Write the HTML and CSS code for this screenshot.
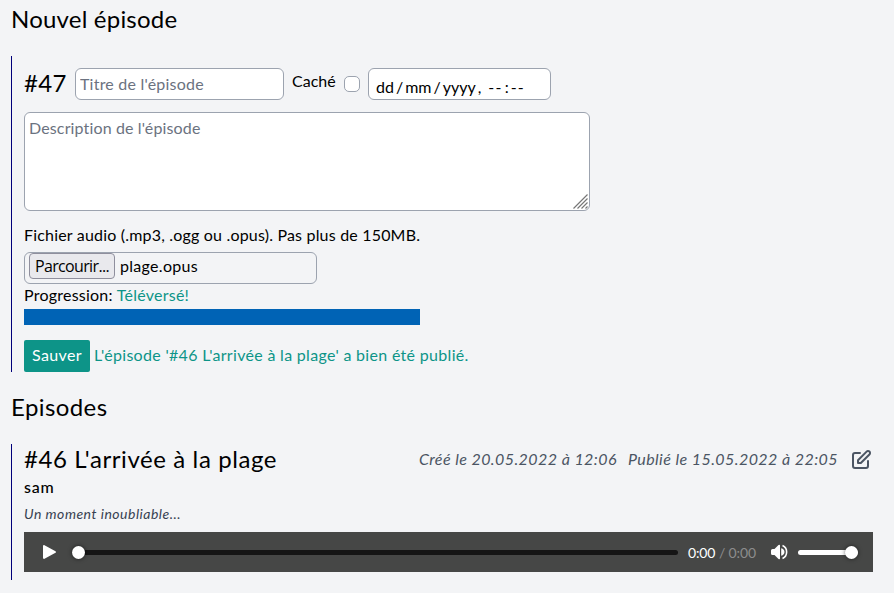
FILE: index.html
```html
<!DOCTYPE html>
<html lang="fr">
<head>
<meta charset="utf-8">
<title>Nouvel épisode</title>
<link rel="stylesheet" href="styles.css">
</head>
<body>
<h1 class="heading"><span class="t-new">Nouvel épisode</span></h1>
<form class="panel form">
  <div class="row">
    <span class="number">#47</span>
    <input class="field title" type="text" placeholder="Titre de l'épisode">
    <label class="hidden-label" for="hidden">Caché</label>
    <input class="check" id="hidden" type="checkbox">
    <div class="field date"><span>dd</span><span>/</span><span>mm</span><span>/</span><span>yyyy</span><span>,</span><span class="time">--</span><span>:</span><span class="dash">--</span></div>
  </div>
  <div class="area-wrap">
    <textarea class="field area" placeholder="Description de l'épisode"></textarea>
    <svg class="grip" width="15" height="15" viewBox="0 0 15 15"><path d="M.5 14.500 14.500.5M4.500 14.500l10-10M8.500 14.500l6-6M12.500 14.500l2-2"/></svg>
  </div>
  <div class="upload">
    <div class="line"><span class="t-file">Fichier audio (.mp3, .ogg ou .opus). Pas plus de 150MB.</span></div>
    <div class="field file"><button class="browse" type="button">Parcourir...</button><span class="t-name">plage.opus</span></div>
    <div class="line progress-line"><span class="t-prog">Progression:</span><span class="ok t-up">Téléversé!</span></div>
    <div class="bar"></div>
  </div>
  <div class="save-row"><button class="save" type="button">Sauver</button><span class="ok t-msg">L'épisode '#46 L'arrivée à la plage' a bien été publié.</span></div>
</form>
<h2 class="heading second"><span class="t-eps">Episodes</span></h2>
<article class="panel episode">
  <header class="head">
    <h3 class="name"><span class="t-ep">#46 L'arrivée à la plage</span></h3>
    <div class="meta">
      <span class="t-made">Créé le 20.05.2022 à 12:06</span>
      <span class="t-pub">Publié le 15.05.2022 à 22:05</span>
      <svg class="edit" width="24" height="24" viewBox="0 0 24 24"><path d="M11 5H6a2 2 0 00-2 2v11a2 2 0 002 2h11a2 2 0 002-2v-5m-1.414-9.414a2 2 0 112.828 2.828L11.828 15H9v-2.828l8.586-8.586z"/></svg>
    </div>
  </header>
  <div class="author"><span>sam</span></div>
  <div class="desc"><span>Un moment inoubliable...</span></div>
  <div class="player">
    <svg class="play" width="14" height="14" viewBox="0 0 14 14"><path d="M0 1.200C0 .2.700-.2 1.500.3l11 5.900q1 .8 0 1.600L1.500 13.700C.7 14.200 0 13.800 0 12.800z"/></svg>
    <div class="track"><i class="knob"></i></div>
    <span class="now">0:00</span><span class="total">/ 0:00</span>
    <svg class="sound" width="18" height="16" viewBox="0 0 18 16"><path class="solid" d="M0 6.500Q0 5 1.500 5H3.500L7.500 1Q9 .3 9 1.500v13Q9 15.700 7.500 15L3.500 11H1.500Q0 11 0 9.500z"/><path class="solid" d="M10.200 4.200q3.300 1 3.300 3.800t-3.300 3.800z"/><path d="M11.500 1.500C17 4 17 12 11.500 14.500"/></svg>
    <div class="volume"><i class="knob"></i></div>
  </div>
</article>
</body>
</html>
```
FILE: styles.css
```css
* { box-sizing: border-box; }
body { margin: 0; padding: 3px 21px 0 11px; background: #f3f4f6; color: #000; font: 16px/24px Lato, "Noto Sans", sans-serif; }
h1, h2, h3 { margin: 0; font-weight: 400; }
.heading, .name, .number { font-size: 24px; line-height: 32px; }
.panel { border-left: 1px solid #00007a; padding-left: 12px; }
.form { margin-top: 21px; height: 316px; padding-top: 12px; }
.row { display: flex; height: 32px; }
.number { width: 51px; margin-top: -1px; letter-spacing: .3px; }
.field { border: 1px solid #9ca3af; border-radius: 6px; background: #fff; font: inherit; padding: 0 4px; outline: 0; }
.field::placeholder { color: #6b7280; opacity: 1; }
.title { width: 209px; height: 32px; padding-bottom: 2px; letter-spacing: .22px; }
.hidden-label { margin: 1px 0 0 8px; width: 52px; }
.check { appearance: none; margin: 8px 8px 0 0; width: 16px; height: 16px; border: 1px solid #9ca3af; border-radius: 5px; background: #fff; }
.date { width: 183px; height: 32px; display: flex; padding: 6px 7px 0; gap: 2px; }
.time { margin-left: 5px; }
.time, .dash { letter-spacing: 1.2px; }
.area-wrap { position: relative; width: 566px; height: 99px; margin-top: 12px; }
.area { display: block; width: 566px; height: 99px; padding: 3px 4px; resize: none; letter-spacing: .14px; }
.grip { position: absolute; right: 2px; bottom: 2px; fill: none; stroke: #777; stroke-width: 1.2; }
.upload { margin-top: 12px; }
.t-new { letter-spacing: .2px; }
.t-file { letter-spacing: .19px; }
.file { display: flex; width: 293px; height: 32px; background: transparent; margin-top: 5px; }
.browse { width: 86px; height: 26px; padding: 0; border: 1px solid #8f8f9d; border-radius: 4px; background: #e9e9ed; color: #000; font: 16px/22px "Open Sans", sans-serif; letter-spacing: -.65px; }
.t-name { margin: 1px 0 0 5px; letter-spacing: .3px; }
.progress-line { display: flex; gap: 4px; margin-top: -1px; }
.t-prog { letter-spacing: .23px; }
.t-up { letter-spacing: .25px; }
.bar { width: 396px; height: 16px; margin-top: 2px; background: #0063b5; }
.ok { color: #0d9488; }
.save-row { display: flex; align-items: center; gap: 4px; margin-top: 15px; }
.save { width: 66px; height: 32px; padding: 0 0 2px; border: 0; border-radius: 2px; background: #0d9488; color: #fff; font: inherit; letter-spacing: .4px; }
.t-msg { margin-bottom: 2px; letter-spacing: .31px; }
.second { margin-top: 19px; }
.t-eps { letter-spacing: .4px; }
.episode { margin-top: 21px; height: 136px; }
.head { display: flex; justify-content: space-between; height: 32px; }
.name { margin-top: -1px; letter-spacing: .59px; }
.meta { display: flex; align-items: center; color: #4b5563; font-style: italic; }
.t-made, .t-pub { margin-bottom: 2px; letter-spacing: .43px; }
.t-made { margin-right: 11px; }
.edit { margin-left: 11px; fill: none; stroke: #4b5563; stroke-width: 2; stroke-linecap: round; stroke-linejoin: round; }
.author { margin-top: -1px; font-weight: 500; letter-spacing: .8px; }
.desc { height: 20px; margin-top: 5px; font-size: 14px; line-height: 20px; font-style: italic; color: #374151; letter-spacing: .5px; }
.player { display: flex; align-items: center; height: 40px; margin-top: 8px; padding: 0 15px 0 19px; background: #464746; color: #fff; font-size: 14px; }
.player > * { flex-shrink: 0; }
.play { fill: #fff; margin-right: 15px; }
.track { position: relative; width: 606px; height: 5px; border-radius: 3px; background: #151515; }
.knob { position: absolute; top: -4px; width: 13px; height: 13px; border-radius: 50%; background: #fff; box-shadow: 0 0 4px #0009; }
.track .knob { left: 0; }
.now { width: 27px; margin-left: 10px; }
.now, .total { padding-top: 2px; letter-spacing: -.15px; }
.total { width: 36px; margin-left: 4px; color: #8d8d8d; white-space: nowrap; }
.sound { margin-left: 16px; fill: none; stroke: #fff; stroke-width: 1.6; }
.solid { fill: #fff; stroke: none; }
.volume { position: relative; width: 60px; height: 5px; margin-left: 9px; border-radius: 3px; background: #fff; }
.volume .knob { right: 0; }
```
